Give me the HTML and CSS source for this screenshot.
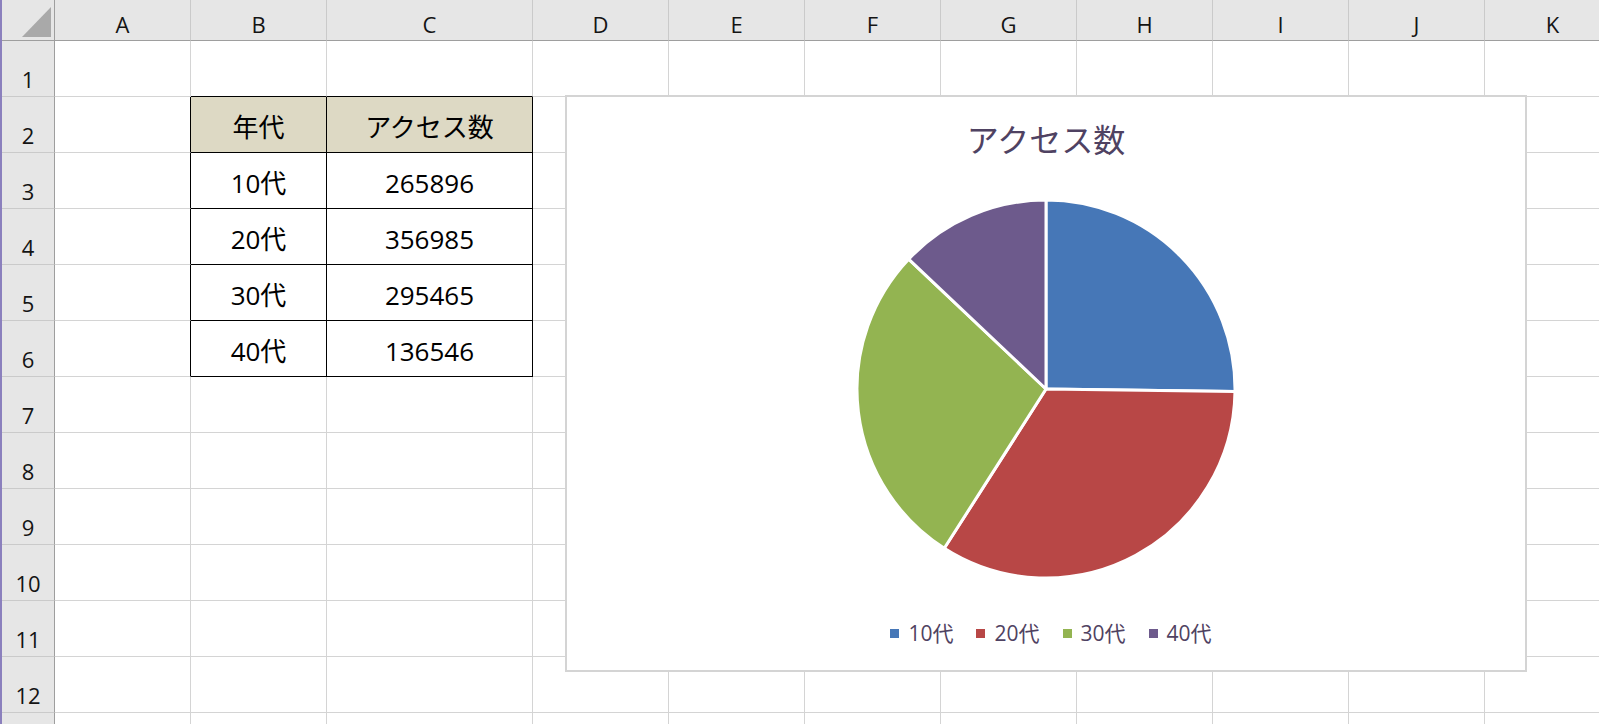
FILE: index.html
```html
<!DOCTYPE html>
<html lang="ja">
<head>
<meta charset="utf-8">
<title>アクセス数</title>
<link rel="stylesheet" href="styles.css">
</head>
<body>
    <div class="sheet">
        <!-- column headers -->
        <div class="row head-row">
            <div class="corner">
                <svg width="53" height="40" viewBox="0 0 53 40"><polygon points="49,7 49,37 20,37" fill="#a9a9a9"/></svg>
            </div>
            <div class="ch">A</div><div class="ch">B</div><div class="ch">C</div><div class="ch">D</div>
            <div class="ch">E</div><div class="ch">F</div><div class="ch">G</div><div class="ch">H</div>
            <div class="ch">I</div><div class="ch">J</div><div class="ch">K</div>
        </div>

        <div class="row">
            <div class="rh">1</div>
            <div class="c"></div><div class="c over-table"></div><div class="c over-table"></div><div class="c"></div>
            <div class="c"></div><div class="c"></div><div class="c"></div><div class="c"></div>
            <div class="c"></div><div class="c"></div><div class="c"></div>
        </div>
        <div class="row">
            <div class="rh">2</div>
            <div class="c left-of-table"></div><div class="c tb tb-head">年代</div><div class="c tb tb-head">アクセス数</div><div class="c"></div>
            <div class="c"></div><div class="c"></div><div class="c"></div><div class="c"></div>
            <div class="c"></div><div class="c"></div><div class="c"></div>
        </div>
        <div class="row">
            <div class="rh">3</div>
            <div class="c left-of-table"></div><div class="c tb">10代</div><div class="c tb">265896</div><div class="c"></div>
            <div class="c"></div><div class="c"></div><div class="c"></div><div class="c"></div>
            <div class="c"></div><div class="c"></div><div class="c"></div>
        </div>
        <div class="row">
            <div class="rh">4</div>
            <div class="c left-of-table"></div><div class="c tb">20代</div><div class="c tb">356985</div><div class="c"></div>
            <div class="c"></div><div class="c"></div><div class="c"></div><div class="c"></div>
            <div class="c"></div><div class="c"></div><div class="c"></div>
        </div>
        <div class="row">
            <div class="rh">5</div>
            <div class="c left-of-table"></div><div class="c tb">30代</div><div class="c tb">295465</div><div class="c"></div>
            <div class="c"></div><div class="c"></div><div class="c"></div><div class="c"></div>
            <div class="c"></div><div class="c"></div><div class="c"></div>
        </div>
        <div class="row">
            <div class="rh">6</div>
            <div class="c left-of-table"></div><div class="c tb">40代</div><div class="c tb">136546</div><div class="c"></div>
            <div class="c"></div><div class="c"></div><div class="c"></div><div class="c"></div>
            <div class="c"></div><div class="c"></div><div class="c"></div>
        </div>
        <div class="row">
            <div class="rh">7</div>
            <div class="c"></div><div class="c"></div><div class="c"></div><div class="c"></div>
            <div class="c"></div><div class="c"></div><div class="c"></div><div class="c"></div>
            <div class="c"></div><div class="c"></div><div class="c"></div>
        </div>
        <div class="row">
            <div class="rh">8</div>
            <div class="c"></div><div class="c"></div><div class="c"></div><div class="c"></div>
            <div class="c"></div><div class="c"></div><div class="c"></div><div class="c"></div>
            <div class="c"></div><div class="c"></div><div class="c"></div>
        </div>
        <div class="row">
            <div class="rh">9</div>
            <div class="c"></div><div class="c"></div><div class="c"></div><div class="c"></div>
            <div class="c"></div><div class="c"></div><div class="c"></div><div class="c"></div>
            <div class="c"></div><div class="c"></div><div class="c"></div>
        </div>
        <div class="row">
            <div class="rh">10</div>
            <div class="c"></div><div class="c"></div><div class="c"></div><div class="c"></div>
            <div class="c"></div><div class="c"></div><div class="c"></div><div class="c"></div>
            <div class="c"></div><div class="c"></div><div class="c"></div>
        </div>
        <div class="row">
            <div class="rh">11</div>
            <div class="c"></div><div class="c"></div><div class="c"></div><div class="c"></div>
            <div class="c"></div><div class="c"></div><div class="c"></div><div class="c"></div>
            <div class="c"></div><div class="c"></div><div class="c"></div>
        </div>
        <div class="row">
            <div class="rh">12</div>
            <div class="c"></div><div class="c"></div><div class="c"></div><div class="c"></div>
            <div class="c"></div><div class="c"></div><div class="c"></div><div class="c"></div>
            <div class="c"></div><div class="c"></div><div class="c"></div>
        </div>
        <!-- next row only peeks in at the bottom -->
        <div class="row last-row">
            <div class="rh"></div>
            <div class="c"></div><div class="c"></div><div class="c"></div><div class="c"></div>
            <div class="c"></div><div class="c"></div><div class="c"></div><div class="c"></div>
            <div class="c"></div><div class="c"></div><div class="c"></div>
        </div>

        <!-- floating pie chart -->
        <div class="chart">
            <div class="chart-title">アクセス数</div>
            <svg class="pie" width="384" height="384" viewBox="0 0 384 384">
                <g stroke="#fff" stroke-width="3" stroke-linejoin="round">
                    <path d="M192,192 L192,3 A189,189 0 0,1 380.98,194.44 Z" fill="#4677b7"/>
                    <path d="M192,192 L380.98,194.44 A189,189 0 0,1 90.26,351.29 Z" fill="#b84746"/>
                    <path d="M192,192 L90.26,351.29 A189,189 0 0,1 54.67,62.14 Z" fill="#93b451"/>
                    <path d="M192,192 L54.67,62.14 A189,189 0 0,1 192,3 Z" fill="#6d5a8c"/>
                </g>
            </svg>
            <div class="legend">
                <div class="legend-item"><span class="swatch blue"></span>10代</div>
                <div class="legend-item"><span class="swatch red"></span>20代</div>
                <div class="legend-item"><span class="swatch green"></span>30代</div>
                <div class="legend-item"><span class="swatch purple"></span>40代</div>
            </div>
        </div>
    </div>
</body>
</html>
```

FILE: styles.css
```css
body {
    margin: 0;
    overflow: hidden;
    background: #ffffff;
    font-family: "Open Sans", "Noto Sans CJK JP", sans-serif;
    color: #000000;
}

.sheet {
    position: relative;
    width: 1620px;
    height: 724px;
    overflow: hidden;
    border-left: 2px solid #8b80bd;
}

.row {
    display: grid;
    grid-template-columns: 53px 136px 136px 206px repeat(8, 136px);
    height: 56px;
}

.row > div {
    box-sizing: border-box;
}

.last-row {
    height: 12px;
}

/* headers */
.head-row {
    height: 41px;
}

.corner {
    background: #e6e6e6;
    border-right: 1px solid #9e9e9e;
    border-bottom: 1px solid #9e9e9e;
}
.corner svg {
    display: block;
}

.ch {
    display: flex;
    align-items: center;
    justify-content: center;
    padding-top: 7px;
    background: #e6e6e6;
    border-right: 1px solid #cacaca;
    border-bottom: 1px solid #9e9e9e;
    font-size: 22px;
    color: #141414;
}

.rh {
    display: flex;
    align-items: flex-end;
    justify-content: center;
    padding-bottom: 2px;
    background: #e6e6e6;
    border-right: 1px solid #9e9e9e;
    border-bottom: 1px solid #cacaca;
    font-size: 22px;
    color: #141414;
}

/* plain cells */
.c {
    border-right: 1px solid #d4d4d4;
    border-bottom: 1px solid #d4d4d4;
}
.c.over-table {
    border-bottom-color: #000000;
}
.c.left-of-table {
    border-right-color: #000000;
}

/* the small data table */
.c.tb {
    display: flex;
    align-items: center;
    justify-content: center;
    padding-top: 4px;
    border-right-color: #000000;
    border-bottom-color: #000000;
    font-size: 26px;
    line-height: 30px;
}
.c.tb-head {
    background: #ddd9c4;
}

/* chart object */
.chart {
    position: absolute;
    left: 563px;
    top: 95px;
    width: 962px;
    height: 577px;
    box-sizing: border-box;
    border: 2px solid #d4d4d4;
    background: #ffffff;
    display: flex;
    flex-direction: column;
    align-items: center;
    color: #4f4262;
}

.chart-title {
    margin-top: 23px;
    font-size: 32px;
    line-height: 40px;
}

.pie {
    display: block;
    margin-top: 37px;
}

.legend {
    display: flex;
    gap: 23px;
    margin-top: 40px;
    padding-left: 10px;
    font-size: 21px;
    line-height: 24px;
}

.legend-item {
    display: flex;
    align-items: center;
    gap: 9px;
}

.swatch {
    width: 9px;
    height: 9px;
}
.swatch.blue { background: #4677b7; }
.swatch.red { background: #b84746; }
.swatch.green { background: #93b451; }
.swatch.purple { background: #6d5a8c; }
```
